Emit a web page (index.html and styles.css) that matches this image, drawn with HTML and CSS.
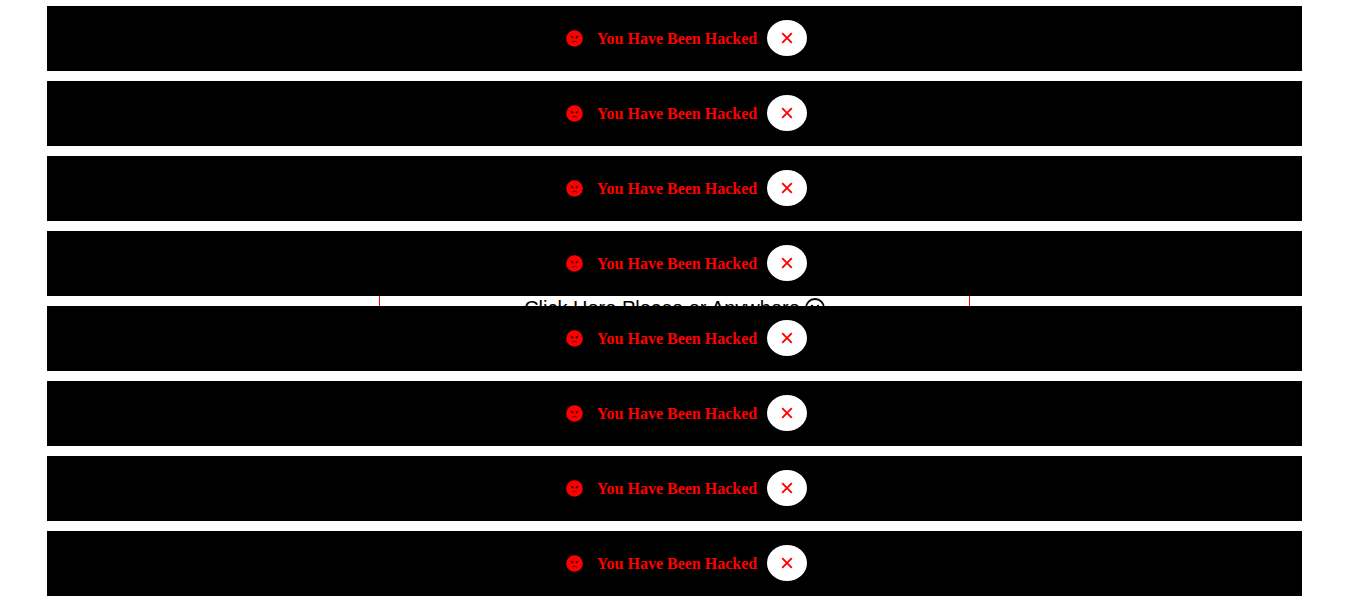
FILE: index.html
```html
<!DOCTYPE html>
<html lang="en">
<head>
<meta charset="utf-8">
<title>Click Here</title>
<link rel="stylesheet" href="styles.css">
</head>
<body>
<svg class="defs" aria-hidden="true">
  <symbol id="angry" viewBox="0 0 17 17">
    <circle cx="8.500" cy="8.500" r="8.300" fill="#f00"/>
    <path d="M4.500 6l3 1.200M12.500 6l-3 1.200" fill="none" stroke="#000" stroke-width=".7"/>
    <path d="M6 12.300c1.200-1.300 3.800-1.300 5 0" fill="none" stroke="#000" stroke-width=".7"/>
    <circle cx="6.200" cy="7.600" r=".8"/>
    <circle cx="10.800" cy="7.600" r=".8"/>
  </symbol>
  <symbol id="cross" viewBox="0 0 12 12">
    <path d="M1.200 1.200l9.600 9.600M10.800 1.200l-9.600 9.600" fill="none" stroke="#f00" stroke-width="1.900"/>
  </symbol>
</svg>
<main class="stage">
  <button class="trigger" type="button">Click Here Please or Anywhere
    <svg class="smile" viewBox="0 0 20 20" aria-hidden="true"><circle cx="10" cy="10" r="9" fill="none" stroke="#000" stroke-width="1.800"/><circle cx="7" cy="8" r="1.200"/><circle cx="13" cy="8" r="1.200"/><path d="M5.500 12c2 4 7 4 9 0" fill="none" stroke="#000" stroke-width="1.400"/></svg>
  </button>
  <div class="alerts">
    <div class="alert"><svg class="face" aria-hidden="true"><use href="#angry"/></svg><span class="message">You Have Been Hacked</span><button class="close" type="button" aria-label="Close"><svg class="cross" aria-hidden="true"><use href="#cross"/></svg></button></div>
    <div class="alert"><svg class="face" aria-hidden="true"><use href="#angry"/></svg><span class="message">You Have Been Hacked</span><button class="close" type="button" aria-label="Close"><svg class="cross" aria-hidden="true"><use href="#cross"/></svg></button></div>
    <div class="alert"><svg class="face" aria-hidden="true"><use href="#angry"/></svg><span class="message">You Have Been Hacked</span><button class="close" type="button" aria-label="Close"><svg class="cross" aria-hidden="true"><use href="#cross"/></svg></button></div>
    <div class="alert"><svg class="face" aria-hidden="true"><use href="#angry"/></svg><span class="message">You Have Been Hacked</span><button class="close" type="button" aria-label="Close"><svg class="cross" aria-hidden="true"><use href="#cross"/></svg></button></div>
    <div class="alert"><svg class="face" aria-hidden="true"><use href="#angry"/></svg><span class="message">You Have Been Hacked</span><button class="close" type="button" aria-label="Close"><svg class="cross" aria-hidden="true"><use href="#cross"/></svg></button></div>
    <div class="alert"><svg class="face" aria-hidden="true"><use href="#angry"/></svg><span class="message">You Have Been Hacked</span><button class="close" type="button" aria-label="Close"><svg class="cross" aria-hidden="true"><use href="#cross"/></svg></button></div>
    <div class="alert"><svg class="face" aria-hidden="true"><use href="#angry"/></svg><span class="message">You Have Been Hacked</span><button class="close" type="button" aria-label="Close"><svg class="cross" aria-hidden="true"><use href="#cross"/></svg></button></div>
    <div class="alert"><svg class="face" aria-hidden="true"><use href="#angry"/></svg><span class="message">You Have Been Hacked</span><button class="close" type="button" aria-label="Close"><svg class="cross" aria-hidden="true"><use href="#cross"/></svg></button></div>
  </div>
</main>
</body>
</html>
```
FILE: styles.css
```css
* {
  box-sizing: border-box;
}

body {
  margin: 0;
  background: #fff;
}

.defs {
  display: none;
}

/* The trigger and the alerts share one grid cell, alerts on top. */
.stage {
  display: grid;
  padding: 6px 44px 4px 47px;
}

.trigger,
.alerts {
  grid-area: 1 / 1;
}

.trigger {
  display: flex;
  align-items: center;
  justify-content: center;
  gap: 5px;
  place-self: center;
  margin-top: 14px;
  padding: 16px 144px;
  border: 1px solid #f00;
  background: #fff;
  color: #000;
  font: 20px/24px "Liberation Sans", Arial, sans-serif;
}

.smile {
  width: 20px;
  height: 20px;
}

.alerts {
  display: flex;
  flex-direction: column;
  gap: 10px;
  z-index: 1;
}

.alert {
  display: flex;
  align-items: center;
  justify-content: center;
  padding: 14px 0 15px 24px;
  background: #000;
  color: #f00;
  font: bold 16px/20px "Liberation Serif", "Times New Roman", serif;
}

.face {
  width: 17px;
  height: 17px;
  margin-right: 14px;
}

.message {
  padding-top: 2px;
}

.close {
  display: flex;
  align-items: center;
  justify-content: center;
  width: 40px;
  height: 36px;
  margin-left: 10px;
  padding: 0;
  border: 0;
  border-radius: 50%;
  background: #fff;
}

.cross {
  width: 12px;
  height: 12px;
}
```
